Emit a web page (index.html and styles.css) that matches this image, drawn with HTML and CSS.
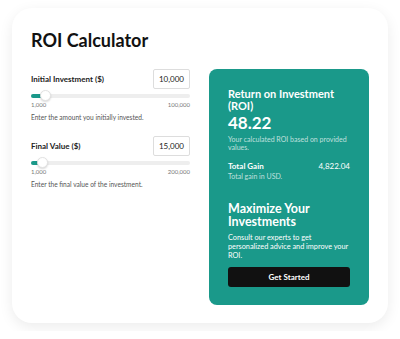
FILE: index.html
```html
<!DOCTYPE html>
<html lang="en">
<head>
    <meta charset="UTF-8">
    <meta name="viewport" content="width=device-width, initial-scale=1.0">
    <title>ROI Calculator</title>
    <link rel="stylesheet" href="styles.css">
</head>
<body>
    <div class="card">
        <h1 class="title">ROI Calculator</h1>
        <div class="content">
            <div class="column">
                <div class="field">
                    <div class="field-row">
                        <label for="initial">Initial Investment ($)</label>
                        <input type="text" id="initial" value="10,000">
                    </div>
                    <div class="slider">
                        <div class="slider-fill" style="width: 9.1%"></div>
                        <div class="slider-thumb" style="left: 9.1%"></div>
                    </div>
                    <div class="range-labels">
                        <span>1,000</span>
                        <span>100,000</span>
                    </div>
                    <p class="help">Enter the amount you initially invested.</p>
                </div>
                <div class="field">
                    <div class="field-row">
                        <label for="final">Final Value ($)</label>
                        <input type="text" id="final" value="15,000">
                    </div>
                    <div class="slider">
                        <div class="slider-fill" style="width: 7%"></div>
                        <div class="slider-thumb" style="left: 7%"></div>
                    </div>
                    <div class="range-labels">
                        <span>1,000</span>
                        <span>200,000</span>
                    </div>
                    <p class="help">Enter the final value of the investment.</p>
                </div>
            </div>
            <div class="panel">
                <h2 class="panel-title">Return on Investment (ROI)</h2>
                <div class="roi-value">48.22</div>
                <p class="panel-note">Your calculated ROI based on provided values.</p>
                <div class="gain-row">
                    <span class="gain-label">Total Gain</span>
                    <span class="gain-value">4,822.04</span>
                </div>
                <p class="panel-note">Total gain in USD.</p>
                <h2 class="promo-title">Maximize Your Investments</h2>
                <p class="promo-text">Consult our experts to get personalized advice and improve your ROI.</p>
                <button class="cta">Get Started</button>
            </div>
        </div>
    </div>
</body>
</html>
```

FILE: styles.css
```css
body {
    margin: 0;
    background: #fff;
    font-family: Lato, sans-serif;
    color: #222;
}
.card {
    margin: 8px 12px;
    width: 376px;
    height: 315px;
    box-sizing: border-box;
    padding: 20px 19px;
    background: #fff;
    border-radius: 20px;
    box-shadow: 0 4px 14px rgba(0, 0, 0, 0.08);
}
.title {
    margin: 0 0 17px;
    font-size: 18px;
    line-height: 24px;
    font-weight: 700;
    color: #111;
}
.content {
    display: flex;
    gap: 19px;
}
.column {
    flex: 0 0 159px;
    display: flex;
    flex-direction: column;
    gap: 14px;
}
.field-row {
    display: flex;
    justify-content: space-between;
    align-items: center;
}
.field-row label {
    font-size: 8px;
    font-weight: 700;
    color: #222;
}
.field-row input {
    width: 37px;
    height: 20px;
    box-sizing: border-box;
    border: 1px solid #ddd;
    border-radius: 2px;
    padding: 0;
    text-align: center;
    font-family: Lato, sans-serif;
    font-size: 8px;
    color: #222;
}
.slider {
    position: relative;
    margin-top: 5px;
    height: 4px;
    border-radius: 2px;
    background: #eee;
}
.slider-fill {
    height: 100%;
    border-radius: 2px;
    background: #1a998a;
}
.slider-thumb {
    position: absolute;
    top: -4px;
    width: 11px;
    height: 11px;
    margin-left: -5px;
    box-sizing: border-box;
    border-radius: 50%;
    background: #fff;
    border: 1px solid #e2e2e2;
    box-shadow: 0 1px 2px rgba(0, 0, 0, 0.15);
}
.range-labels {
    display: flex;
    justify-content: space-between;
    margin-top: 3px;
    font-size: 6px;
    line-height: 8px;
    color: #777;
}
.help {
    margin: 4px 0 0;
    font-size: 6.6px;
    line-height: 9px;
    color: #555;
}
.panel {
    flex: 0 0 160px;
    box-sizing: border-box;
    padding: 19px 19px 18px;
    background: #1a998a;
    border-radius: 8px;
    color: #fff;
}
.panel-title {
    margin: 0;
    font-size: 11px;
    line-height: 12px;
    font-weight: 700;
}
.roi-value {
    margin-bottom: 2px;
    font-size: 17px;
    line-height: 21px;
    font-weight: 700;
}
.panel-note {
    margin: 1px 0 0;
    font-size: 7px;
    line-height: 8px;
    color: rgba(255, 255, 255, 0.72);
}
.gain-row {
    display: flex;
    justify-content: space-between;
    margin-top: 10px;
    font-size: 8px;
    line-height: 10px;
}
.gain-label {
    font-weight: 700;
}
.promo-title {
    margin: 22px 0 0;
    font-size: 12.5px;
    line-height: 13px;
    font-weight: 700;
}
.promo-text {
    margin: 5px 0 0;
    font-size: 7.3px;
    line-height: 9px;
}
.cta {
    display: block;
    width: 100%;
    height: 20px;
    margin-top: 7px;
    border: none;
    border-radius: 3px;
    background: #111;
    color: #fff;
    font-family: Lato, sans-serif;
    font-size: 8px;
    font-weight: 700;
}
```
